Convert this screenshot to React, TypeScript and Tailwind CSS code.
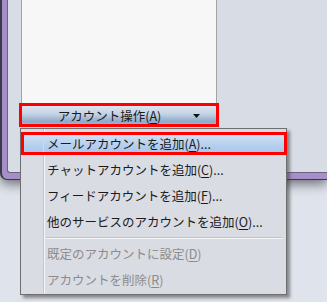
import React from "react";

const font = { fontFamily: '"Noto Sans CJK JP", "Noto Sans", sans-serif' };

function U({ c }: { c: string }) {
  return <span className="underline underline-offset-2">{c}</span>;
}

function Item({ children, disabled }: { children: React.ReactNode; disabled?: boolean }) {
  return (
    <div
      className={`h-[26px] flex items-center pl-[26px] text-[12.5px] leading-none ${
        disabled ? "text-[#8c8c8c]" : "text-[#1b1b1b]"
      }`}
    >
      {children}
    </div>
  );
}

export default function App() {
  return (
    <div className="relative w-[327px] h-[302px] overflow-hidden bg-[#dfe3eb]" style={font}>
      {/* window */}
      <div className="h-[180px] bg-[#a68ec9] border-l-2 border-b border-[#3c3a46] rounded-bl-[7px] pl-[5px] pb-[6px] shadow-[0_4px_12px_rgba(30,30,40,0.6)]">
        <div className="h-full bg-[#d8dce4] border-l border-b border-[#6a6280] rounded-bl-[3px] pl-[13px]">
          <div className="w-[196px] h-[126px] bg-[#f7f7f7] border-x border-[#a3a3a3] flex flex-col justify-end">
            <div className="h-[20px] flex items-center bg-[linear-gradient(to_bottom,#dde5ef_0%,#c4d3e5_40%,#8ea9c8_78%,#a6bcd7_100%)] text-[12.5px] text-[#1b1b1b] leading-none">
              <div className="flex-1 text-center pl-[4px]">
                アカウント操作(<U c="A" />)
              </div>
              <div className="w-[23px] flex items-center">
                <svg width="7" height="4" viewBox="0 0 7 4">
                  <path d="M0 0H7L3.5 4Z" fill="#111" />
                </svg>
              </div>
            </div>
          </div>
        </div>
      </div>

      {/* red box around button */}
      <div className="absolute left-[19px] top-[103px] w-[200px] h-[24px] border-[3px] border-[#ff0000]" />

      {/* menu */}
      <div className="absolute left-[20px] top-[128px] w-[267px] h-[167px] bg-[#d9dce3] border border-[#6e6e6e] pt-[2px] shadow-[3px_3px_3px_rgba(60,60,60,0.55)]">
        <div className="absolute left-[22px] top-0 bottom-0 w-px bg-[#c4c6cc]" />
        <div className="absolute left-[23px] top-0 bottom-0 w-px bg-[#f4f5f7]" />
        <div className="relative">
          <div className="absolute left-[1px] right-[1px] top-[2px] h-[22px] rounded-[3px] border border-[#a3c0e4] bg-[linear-gradient(to_bottom,#d2e3f7_0%,#b8d1ef_50%,#a6c4eb_100%)]" />
          <div className="absolute left-[22px] top-[3px] h-[20px] w-px bg-[#c9dbf0]" />
          <div className="relative">
            <Item>
              メールアカウントを追加(<U c="A" />)...
            </Item>
          </div>
        </div>
        <Item>
          チャットアカウントを追加(<U c="C" />)...
        </Item>
        <Item>
          フィードアカウントを追加(<U c="F" />)...
        </Item>
        <Item>
          他のサービスのアカウントを追加(<U c="O" />)...
        </Item>
        <div className="h-[6px] flex flex-col justify-center pl-[25px] pr-[3px]">
          <div className="h-px bg-[#c2c4c8]" />
          <div className="h-px bg-[#f6f7f9]" />
        </div>
        <Item disabled>
          既定のアカウントに設定(<U c="D" />)
        </Item>
        <Item disabled>
          アカウントを削除(<U c="R" />)
        </Item>
      </div>

      {/* red box around first menu item */}
      <div className="absolute left-[21px] top-[132px] w-[266px] h-[23px] border-[3px] border-[#ff0000]" />
    </div>
  );
}
